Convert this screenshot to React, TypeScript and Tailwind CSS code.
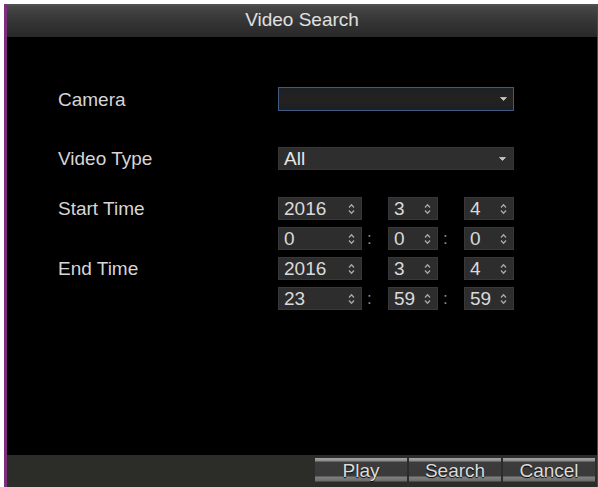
import React from "react";

const font = { fontFamily: '"Liberation Sans", Arial, sans-serif' };

function Spin() {
  return (
    <svg width="7" height="12" viewBox="0 0 7 12" className="shrink-0">
      <path d="M1 4.5 L3.5 1.8 L6 4.5" fill="none" stroke="#a8a8a8" strokeWidth="1.3" />
      <path d="M1 7.5 L3.5 10.2 L6 7.5" fill="none" stroke="#a8a8a8" strokeWidth="1.3" />
    </svg>
  );
}

function Caret() {
  return (
    <svg width="7" height="4" viewBox="0 0 7 4" className="shrink-0">
      <path d="M0.5 0.5 L3.5 3.5 L6.5 0.5 Z" fill="#c4c4c4" stroke="#c4c4c4" strokeWidth="0.8" />
    </svg>
  );
}

function SpinBox({ value, wide }: { value: string; wide?: boolean }) {
  return (
    <div
      className={`${wide ? "w-[84px]" : "w-[50px]"} h-[23px] flex items-center justify-between pl-[5px] pr-[6px] bg-[#2d2d2d] border border-[#383838] text-[19px] leading-none text-[#dadada]`}
    >
      <span>{value}</span>
      <Spin />
    </div>
  );
}

function Sep({ colon }: { colon?: boolean }) {
  return (
    <div className="w-[26px] h-[23px] flex items-center pl-[5px] text-[17px] leading-none text-[#8a8a8a]">
      {colon ? ":" : ""}
    </div>
  );
}

function DateRow({ a, b, c, colon }: { a: string; b: string; c: string; colon?: boolean }) {
  return (
    <div className="flex items-center">
      <SpinBox value={a} wide />
      <Sep colon={colon} />
      <SpinBox value={b} />
      <Sep colon={colon} />
      <SpinBox value={c} />
    </div>
  );
}

function Label({ children }: { children: React.ReactNode }) {
  return <div className="w-[220px] text-[19px] leading-none text-[#d6d6d6]">{children}</div>;
}

function Btn({ children }: { children: React.ReactNode }) {
  return (
    <div className="w-[92px] h-[24px] flex items-center justify-center text-[19px] leading-none text-[#dcdcdc] bg-[linear-gradient(to_bottom,#a2a2a2_0px,#8c8c8c_3px,#3c3c3c_4px,#3a3a3a_18px,#808080_19px,#6c6c6c_23px,#2c2c2c_24px)] [text-shadow:0_1px_1px_#000]">
      {children}
    </div>
  );
}

export default function App() {
  return (
    <div className="w-[598px] h-[487px] bg-white pt-[4px] pl-[4px] overflow-hidden" style={font}>
      <div className="w-[594px] h-[483px] flex flex-col border-l-[3px] border-[#7d2f7d] border-r border-r-[#4a4a4a] bg-black">
        {/* title bar */}
        <div className="h-[33px] shrink-0 flex items-center justify-center bg-[linear-gradient(to_bottom,#555555_0px,#464646_3px,#363636_16px,#282828_33px)] text-[19px] text-[#e0e0e0]">
          Video Search
        </div>

        {/* form */}
        <div className="flex-1 flex flex-col pl-[51px]">
          <div className="mt-[50px] flex items-center">
            <Label>Camera</Label>
            <div className="w-[236px] h-[24px] flex items-center justify-end pr-[6px] bg-[linear-gradient(to_bottom,#1c2127,#24221f_45%,#1d2024)] border border-[#3f5c80]">
              <Caret />
            </div>
          </div>

          <div className="mt-[36px] flex items-center">
            <Label>Video Type</Label>
            <div className="w-[236px] h-[23px] flex items-center justify-between pl-[5px] pr-[7px] bg-[#2e2e2e] border border-[#363636] text-[19px] leading-none text-[#e6e6e6]">
              <span>All</span>
              <Caret />
            </div>
          </div>

          <div className="mt-[27px] flex items-center">
            <Label>Start Time</Label>
            <DateRow a="2016" b="3" c="4" />
          </div>
          <div className="mt-[7px] flex items-center">
            <Label>{""}</Label>
            <DateRow a="0" b="0" c="0" colon />
          </div>
          <div className="mt-[7px] flex items-center">
            <Label>End Time</Label>
            <DateRow a="2016" b="3" c="4" />
          </div>
          <div className="mt-[7px] flex items-center">
            <Label>{""}</Label>
            <DateRow a="23" b="59" c="59" colon />
          </div>
        </div>

        {/* bottom bar */}
        <div className="h-[32px] shrink-0 flex justify-end items-start pt-[3px] pr-[2px] gap-[2px] bg-[#2c2c29]">
          <Btn>Play</Btn>
          <Btn>Search</Btn>
          <Btn>Cancel</Btn>
        </div>
      </div>
    </div>
  );
}
